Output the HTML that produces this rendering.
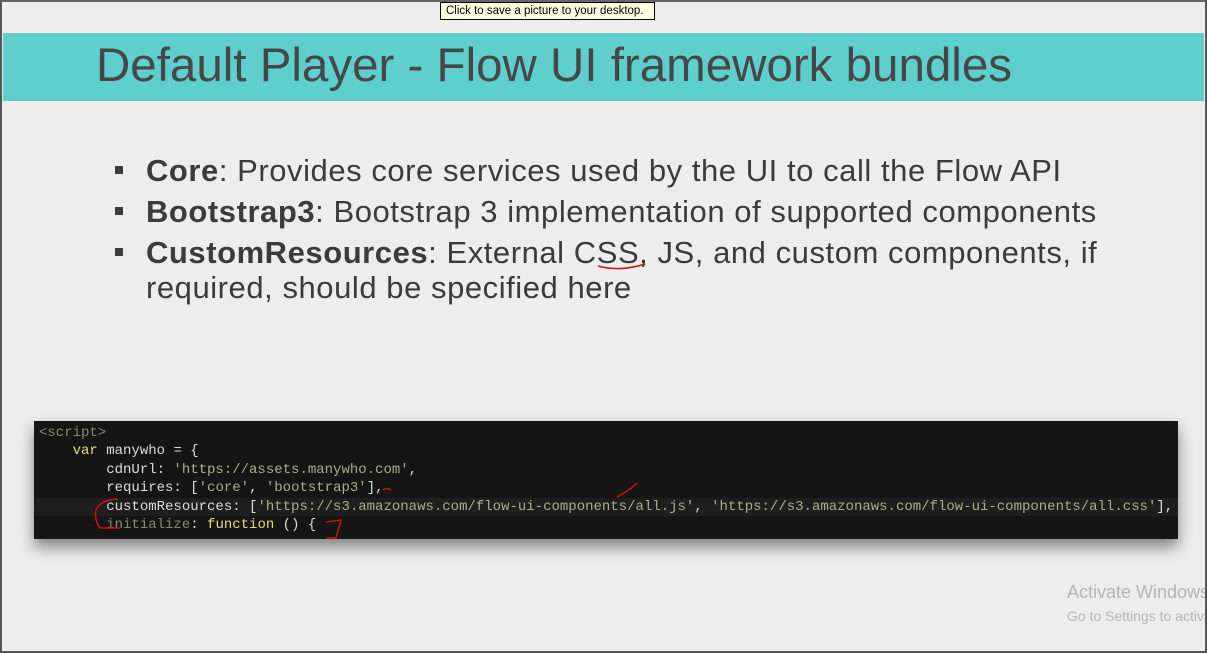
<!DOCTYPE html>
<html><head><meta charset="utf-8"><style>
body{margin:0;width:1207px;height:653px;overflow:hidden;background:#ededed;font-family:"Liberation Sans",sans-serif;position:relative}
.frame{position:absolute;left:0;top:0;width:1203px;height:649px;border:2px solid #555;border-top:2px solid #666}
.tip{position:absolute;left:440px;top:2px;height:18px;background:#ffffe1;border:1px solid #000;font-size:11.5px;line-height:17px;padding-left:5px;box-sizing:border-box;width:215px;white-space:nowrap;overflow:hidden}
.band{position:absolute;left:3px;top:33px;width:1201px;height:68px;background:#5fcfcb}
.title{position:absolute;left:96px;top:42px;font-size:47.5px;line-height:47px;color:#474747;white-space:nowrap}
ul{position:absolute;left:112px;top:150px;margin:0;padding:0;list-style:none;font-size:31px;letter-spacing:0.55px;color:#3b3b3b;line-height:41px;width:1010px}
li{position:relative;padding-left:34px}
li:before{content:"";position:absolute;left:3px;top:16px;width:8px;height:8px;background:#3b3b3b}
.code{position:absolute;left:34px;top:421px;width:1144px;height:118px;background:#151515;box-shadow:0 8px 14px rgba(0,0,0,.45);font-family:"Liberation Mono",monospace;font-size:14px;line-height:18.4px;color:#dcdcdc;white-space:pre;padding-top:3px;box-sizing:border-box;overflow:hidden}
.code div{padding-left:5px;height:18.4px}
.t{color:#8a8a6a}.k{color:#e6db74}.s{color:#a6b08a}.hl{background:#1e1e1e}
.awbox{position:absolute;left:1067px;top:578px;width:138px;height:60px;overflow:hidden}
.aw{position:absolute;left:0;top:4px;font-size:18px;color:#b5b5b5;white-space:nowrap}
.aw2{position:absolute;left:0;top:30px;font-size:14px;color:#b5b5b5;white-space:nowrap}
</style></head><body>
<div class="band"></div>
<div class="title">Default Player - Flow UI framework bundles</div>
<ul>
<li><b>Core</b>: Provides core services used by the UI to call the Flow API</li>
<li><b>Bootstrap3</b>: Bootstrap 3 implementation of supported components</li>
<li style="line-height:35px;padding-top:3px"><b>CustomResources</b>: External CSS, JS, and custom components, if required, should be specified here</li>
</ul>
<div class="code"><div class="t">&lt;script&gt;</div><div>    <span class="k">var</span> manywho = {</div><div>        cdnUrl: <span class="s">'https://assets.manywho.com'</span>,</div><div>        requires: [<span class="s">'core'</span>, <span class="s">'bootstrap3'</span>],</div><div class="hl">        customResources: [<span class="s">'https://s3.amazonaws.com/flow-ui-components/all.js'</span>, <span class="s">'https://s3.amazonaws.com/flow-ui-components/all.css'</span>],</div><div>        <span class="t">initialize</span>: <span class="k">function</span> () {</div></div>
<svg style="position:absolute;left:0;top:0" width="1207" height="653" fill="none" stroke="#d01010" stroke-width="1.5">
<path d="M598 266 Q620 272 645 264"/><path d="M383 490 q4 -3 8 0"/><path d="M617 497 q12 -6 20 -14"/>
<path d="M118 499 Q100 500 96 510 Q94 520 100 528 L120 528"/><path d="M326 522 L341 520 L336 538 L326 538"/>
</svg>
<div class="awbox"><div class="aw">Activate Windows</div><div class="aw2">Go to Settings to activate Windows.</div></div>
<div class="tip">Click to save a picture to your desktop.</div>
<div class="frame"></div>
</body></html>
